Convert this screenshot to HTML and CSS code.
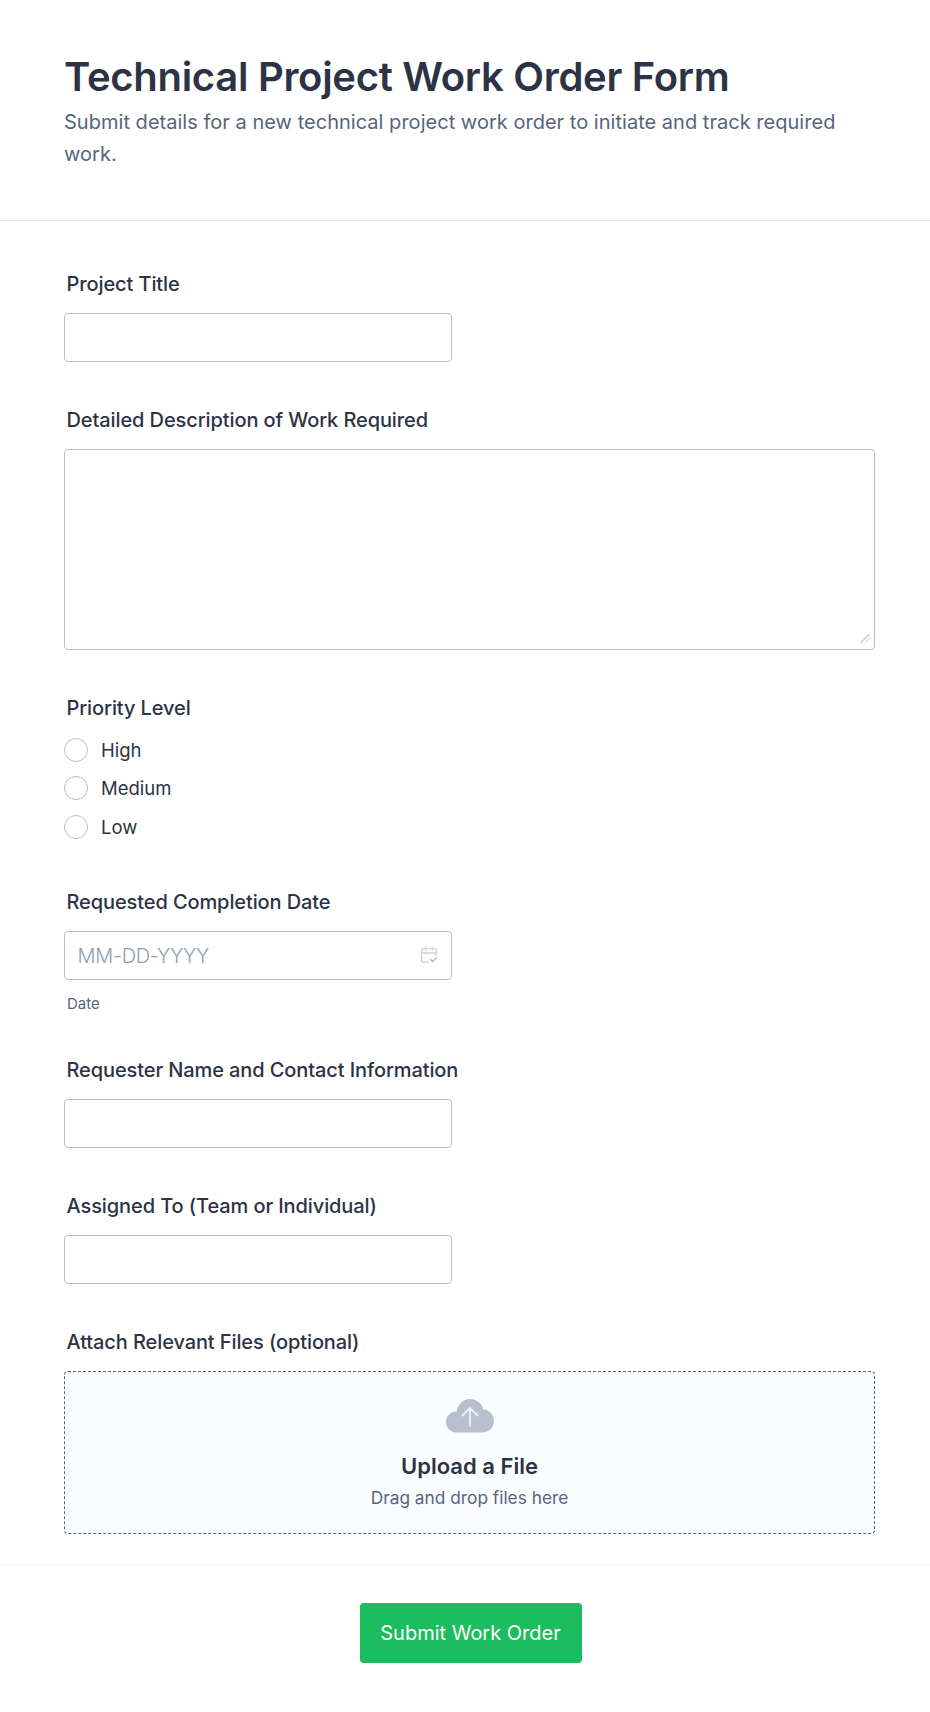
FILE: index.html
```html
<!DOCTYPE html>
<html lang="en">
<head>
<meta charset="utf-8">
<title>Technical Project Work Order Form</title>
<link rel="stylesheet" href="styles.css">
</head>
<body>
<form class="form">
  <header class="head">
    <h1 class="title">Technical Project Work Order Form</h1>
    <p class="subtitle">Submit details for a new technical project work order to initiate and track required work.</p>
  </header>
  <div class="fields">
    <div class="field">
      <label class="label" for="f1">Project Title</label>
      <input class="input" id="f1" type="text">
    </div>
    <div class="field">
      <label class="label" for="f2">Detailed Description of Work Required</label>
      <textarea class="textarea" id="f2"></textarea>
    </div>
    <div class="field field-radio">
      <span class="label label-radio">Priority Level</span>
      <div class="radios">
        <label class="radio"><input class="radio-box" type="radio" name="p"><span>High</span></label>
        <label class="radio"><input class="radio-box" type="radio" name="p"><span>Medium</span></label>
        <label class="radio"><input class="radio-box" type="radio" name="p"><span>Low</span></label>
      </div>
    </div>
    <div class="field field-date">
      <label class="label" for="f4">Requested Completion Date</label>
      <div class="date">
        <span class="date-text" id="f4">MM-DD-YYYY</span>
        <svg class="date-icon" width="18" height="18" viewBox="0 0 18 18" fill="none" stroke="#ccd2dd" stroke-width="1.4" stroke-linecap="round" stroke-linejoin="round"><path d="M8 16.2H3.6a2 2 0 0 1-2-2V4.6a2 2 0 0 1 2-2h10.8a2 2 0 0 1 2 2v5"/><path d="M1.6 7h14.8"/><path d="M5.500 1v3M12.500 1v3"/><path d="M10.600 13.600l2 2 3.800-3.800" stroke="#b4bcc9"/></svg>
      </div>
      <span class="sublabel">Date</span>
    </div>
    <div class="field">
      <label class="label" for="f5">Requester Name and Contact Information</label>
      <input class="input" id="f5" type="text">
    </div>
    <div class="field">
      <label class="label" for="f6">Assigned To (Team or Individual)</label>
      <input class="input" id="f6" type="text">
    </div>
    <div class="field field-upload">
      <span class="label">Attach Relevant Files (optional)</span>
      <div class="upload">
        <svg class="cloud" width="48" height="34" viewBox="0 0 48 34"><path fill="#b8c0cd" d="M24 0c6.600 0 12 4.500 13.300 10.600C43 11 48 15.700 48 22c0 6.500-5 11.500-11.500 11.500h-26C4.600 33.500 0 29 0 23c0-5.500 4-10 9.500-10.500h1.100C11.700 5.300 17.200 0 24 0z"/><path fill="none" stroke="#eef0f5" stroke-width="1.800" stroke-linecap="round" stroke-linejoin="round" d="M24 27V9M16.500 16.500L24 9l7.500 7.500"/></svg>
        <strong class="upload-title">Upload a File</strong>
        <span class="upload-text">Drag and drop files here</span>
      </div>
    </div>
  </div>
  <footer class="foot">
    <button class="submit" type="button">Submit Work Order</button>
  </footer>
</form>
</body>
</html>
```
FILE: styles.css
```css
* { box-sizing: border-box; }
html, body { margin: 0; padding: 0; background: #fff; }
body { font-family: Inter, "Liberation Sans", sans-serif; color: #2c3345; }
.form { width: 930px; height: 1712px; display: flex; flex-direction: column; }
.head { flex: none; height: 221px; padding: 53px 64px 0; border-bottom: 1px solid #e3e5ec; }
.title { margin: 0; font-size: 40px; line-height: 48px; font-weight: 600; letter-spacing: -0.3px; color: #2c3345; }
.subtitle { margin: 5px 0 0; font-size: 20px; line-height: 32px; letter-spacing: 0.025px; color: #57647e; }
.fields { flex: none; padding: 50px 64px 0; display: flex; flex-direction: column; }
.field { display: flex; flex-direction: column; align-items: flex-start; margin-bottom: 45px; }
.field-radio { margin-bottom: 50px; }
.field-date { margin-bottom: 44px; }
.field-upload { margin-bottom: 0; }
.label { display: block; margin: 0 0 16px 2.5px; font-size: 20px; line-height: 26px; font-weight: 470; letter-spacing: -0.1px; color: #2c3345; }
.label-radio { margin-bottom: 17px; }
.input { width: 388px; height: 49px; border: 1px solid #b8bdc9; border-radius: 4px; background: #fff; display: block; }
.textarea { width: 811px; height: 201px; border: 1px solid #b8bdc9; border-radius: 4px; background: #fff; display: block; margin: 0; }
.textarea::-webkit-resizer { background: linear-gradient(135deg, transparent 0 44%, #c6cad4 44% 53%, transparent 53% 68%, #c6cad4 68% 77%, transparent 77%) 2px 0 / 9px 9px no-repeat; }
.radios { display: flex; flex-direction: column; gap: 14.4px; }
.radio { display: flex; align-items: center; gap: 13px; height: 24px; font-size: 18.5px; color: #2c3345; }
.radio-box { appearance: none; width: 24px; height: 24px; margin: 0; border: 1px solid #b8bdc9; border-radius: 50%; background: #fff; }
.date { width: 388px; height: 49px; border: 1px solid #b8bdc9; border-radius: 4px; padding: 0 12px; display: flex; align-items: center; justify-content: space-between; }
.date-text { font-size: 20px; font-weight: 300; letter-spacing: -0.3px; margin: 2px 0 0 0.5px; color: #8ba0b0; }
.date-icon { flex: none; margin-right: 1px; }
.sublabel { margin: 15px 0 0 3px; font-size: 15px; line-height: 18px; color: #57647e; }
.upload { width: 811px; height: 163px; border: 1px dashed #57647e; border-radius: 4px; background: #fbfcff; display: flex; flex-direction: column; align-items: center; padding-top: 27px; }
.cloud { display: block; }
.upload-title { margin-top: 19px; font-size: 22px; line-height: 28px; font-weight: 600; color: #2c3345; }
.upload-text { margin-top: 6px; font-size: 17.3px; line-height: 24px; color: #57647e; }
.foot { flex: none; margin-top: auto; height: 148px; border-top: 1px solid #eceef4; display: flex; justify-content: center; padding-top: 37.5px; padding-left: 11px; }
.submit { width: 222px; height: 60px; border: 0; border-radius: 4px; background: #1bbd5e; color: #fff; font: 400 20px Inter, "Liberation Sans", sans-serif; }
```
